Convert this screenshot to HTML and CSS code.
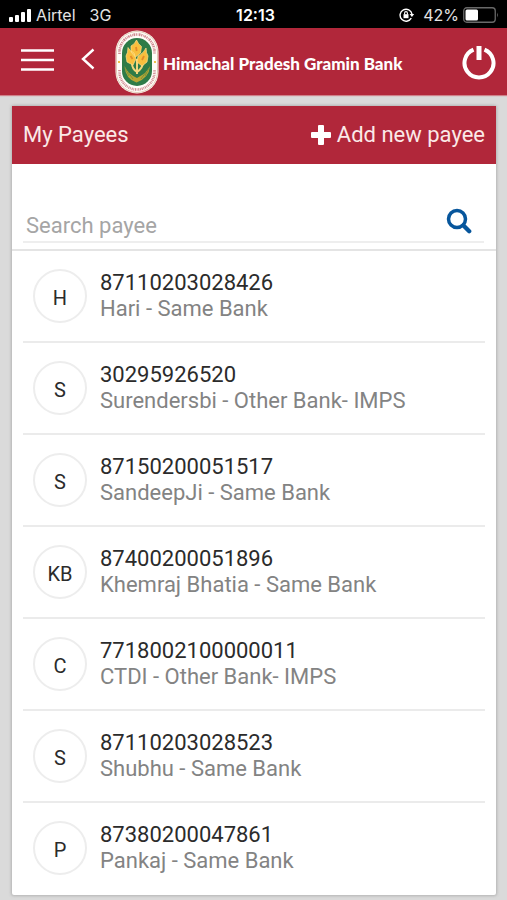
FILE: index.html
```html
<!DOCTYPE html>
<html lang="en">
<head>
<meta charset="utf-8">
<meta name="viewport" content="width=device-width, initial-scale=1">
<title>My Payees</title>
<link rel="stylesheet" href="styles.css">
</head>
<body>
<div class="status">
  <div class="status-side">
    <svg width="24" height="14" viewBox="0 0 24 14" fill="#fff" aria-hidden="true"><rect x="1" y="9" width="4" height="5" rx="1"/><rect x="7" y="7" width="4" height="7" rx="1"/><rect x="13" y="4" width="4" height="10" rx="1"/><rect x="19" y="1" width="4" height="13" rx="1"/></svg>
    <span class="carrier">Airtel</span>
    <span class="network">3G</span>
  </div>
  <div class="clock">12:13</div>
  <div class="status-side status-end">
    <svg width="16" height="14" viewBox="0 0 16 14" fill="none" stroke="#fff" aria-hidden="true"><path d="M12.3 10.2A6 6 0 1 1 13 6.2" stroke-width="1.4"/><path d="M10.6 6h4.6l-2.3 3z" fill="#fff" stroke="none"/><rect x="4.5" y="6.2" width="5" height="4" fill="#fff" stroke="none"/><path d="M5.6 6.5V5a1.4 1.4 0 0 1 2.8 0v1.5" stroke-width="1.1"/></svg>
    <span class="percent">42%</span>
    <svg width="36" height="16" viewBox="0 0 36 16" aria-hidden="true"><rect x=".75" y=".75" width="31.5" height="14.5" rx="3" fill="none" stroke="#696969" stroke-width="1.3"/><rect x="2.5" y="2.5" width="12.5" height="11" rx="1.5" fill="#fff"/><path d="M34 5.5q1.8 2.5 0 5z" fill="#696969"/></svg>
  </div>
</div>
<header class="topbar">
  <button class="icon-btn menu" aria-label="Menu"><svg width="34" height="24" viewBox="0 0 34 24" stroke="#fff" stroke-width="2.6" aria-hidden="true"><path d="M1 2.5h33M1 12h33M1 21.5h33"/></svg></button>
  <button class="icon-btn back" aria-label="Back"><svg width="14" height="22" viewBox="0 0 14 22" fill="none" stroke="#fff" stroke-width="2.4" aria-hidden="true"><path d="M12.5 1.5L2 11l10.500 9.500"/></svg></button>
  <svg class="logo" width="44" height="64" viewBox="0 0 44 64" aria-hidden="true">
    <rect x=".5" y=".5" width="43" height="63" rx="21.500" fill="#fffdf8"/>
    <rect x="1.500" y="1.500" width="41" height="61" rx="20.500" fill="none" stroke="#cfa98a" stroke-width=".6"/>
    <path d="M4.500 24v-2a17.500 17.500 0 0 1 35 0v2" fill="none" stroke="#d08a90" stroke-width="2.600" stroke-dasharray="1.200 .8 .7 .6 1.600 .7"/>
    <path d="M4.500 40v2a17.500 17.500 0 0 0 35 0v-2" fill="none" stroke="#d08a90" stroke-width="2.600" stroke-dasharray="1.100 .7 .8 .8"/>
    <circle cx="4" cy="32" r="1.100" fill="#edb21e"/><circle cx="40" cy="32" r="1.100" fill="#edb21e"/>
    <rect x="7" y="8" width="30" height="48" rx="15" fill="#2e7b47"/>
    <path d="M9.500 36q1 13 12 16.500Q34 48 35 36q-3 7-13 12Q13 44 9.500 36z" fill="#b9a534"/>
    <path d="M10 38l4 8M13 42l5 7M34 38l-4 8M31 42l-5 7" stroke="#79933a" stroke-width="1"/>
    <path d="M22 44V29M22 42q-5-3-5-9M22 42q6-4 6-10" fill="none" stroke="#f3d67c" stroke-width="2"/>
    <path d="M21.500 10q1.500 4 5 6.500l-1 6.500-5 4-4.500-5V16q4-2 5.500-6zM13 17.500q2 4 6 5.500l2 6-3 6-6-3-1-6q2-3 2-8.500zM31 18q0 5 2 8l-1 6-5 4-5-4 1-6q6-3 8-8z" fill="#f8bf3d" stroke="#ffe08c" stroke-width=".7"/>
    <path d="M21 17l.7 4M15.500 26l2 3M29 26l-2 4" stroke="#e58b28" stroke-width="1.800"/>
  </svg>
  <div class="brand">Himachal Pradesh Gramin Bank</div>
  <button class="icon-btn power" aria-label="Log out"><svg width="34" height="36" viewBox="0 0 34 36" fill="none" stroke="#fff" aria-hidden="true"><path d="M11.500 5.600A14.500 14.500 0 1 0 22.500 5.600" stroke-width="4"/><path d="M17 2v14" stroke-width="5"/></svg></button>
</header>
<main class="page">
  <section class="card">
    <div class="card-head">
      <h1>My Payees</h1>
      <button class="add"><svg width="20" height="20" viewBox="0 0 20 20" fill="#fff" aria-hidden="true"><path d="M8 0h4q1 0 1 1v6h6q1 0 1 1v4q0 1-1 1h-6v6q0 1-1 1H8q-1 0-1-1v-6H1q-1 0-1-1V8q0-1 1-1h6V1q0-1 1-1z"/></svg>Add new payee</button>
    </div>
    <div class="search">
      <div class="field">
        <input type="text" placeholder="Search payee" aria-label="Search payee">
        <button class="icon-btn find" aria-label="Search"><svg width="26" height="26" viewBox="0 0 26 26" fill="none" stroke="#07569c" aria-hidden="true"><circle cx="11" cy="11" r="8.500" stroke-width="3.500"/><path d="M17.500 17.500l5.700 5.700" stroke-width="4.300" stroke-linecap="round"/></svg></button>
      </div>
    </div>
    <ul class="payees">
      <li><span class="avatar">H</span><div class="info"><div class="number">87110203028426</div><div class="name">Hari - Same Bank</div></div></li>
      <li><span class="avatar">S</span><div class="info"><div class="number">30295926520</div><div class="name">Surendersbi - Other Bank- IMPS</div></div></li>
      <li><span class="avatar">S</span><div class="info"><div class="number">87150200051517</div><div class="name">SandeepJi - Same Bank</div></div></li>
      <li><span class="avatar">KB</span><div class="info"><div class="number">87400200051896</div><div class="name">Khemraj Bhatia - Same Bank</div></div></li>
      <li><span class="avatar">C</span><div class="info"><div class="number">7718002100000011</div><div class="name">CTDI - Other Bank- IMPS</div></div></li>
      <li><span class="avatar">S</span><div class="info"><div class="number">87110203028523</div><div class="name">Shubhu - Same Bank</div></div></li>
      <li><span class="avatar">P</span><div class="info"><div class="number">87380200047861</div><div class="name">Pankaj - Same Bank</div></div></li>
    </ul>
  </section>
</main>
</body>
</html>
```
FILE: styles.css
```css
* {
  box-sizing: border-box;
}

body {
  margin: 0;
  background: #dadada;
  color: #2b2b2b;
  font-family: Roboto, "Liberation Sans", sans-serif;
}

button {
  padding: 0;
  border: 0;
  background: none;
  color: inherit;
  font: inherit;
}

svg {
  display: block;
  flex: none;
}

.status {
  display: grid;
  grid-template-columns: 1fr auto 1fr;
  align-items: center;
  height: 28px;
  padding: 2px 8px 0;
  background: #000;
  color: #e4e4e4;
  font-family: Inter, "Liberation Sans", sans-serif;
  font-size: 16px;
  line-height: 24px;
}

.status-side {
  display: flex;
  align-items: center;
}

.status-end {
  justify-content: flex-end;
}

.carrier {
  margin: 0 14px 0 4px;
}

.clock {
  padding-left: 4px;
  color: #fff;
  font-weight: 600;
}

.percent {
  margin: 0 4px 0 8px;
}

.topbar {
  display: flex;
  align-items: center;
  height: 67px;
  padding: 0 11px 0 20px;
  background: #b1273a;
  box-shadow: 0 1px 1px #cf8089;
}

.icon-btn {
  flex: none;
}

.menu {
  margin-right: 27px;
  padding-bottom: 4px;
}

.back {
  margin-right: 20px;
  padding-bottom: 6px;
}

.brand {
  flex: 1;
  margin-left: 4px;
  padding-top: 4px;
  color: #fff;
  font-family: Lato, "Liberation Sans", sans-serif;
  font-size: 17px;
  font-weight: 900;
  line-height: 24px;
  white-space: nowrap;
}

.page {
  padding: 11px 11px 6px 12px;
}

.card {
  border-radius: 2px;
  background: #fff;
  box-shadow: 0 0 3px 1px #b4b4b4;
}

.card-head {
  display: flex;
  align-items: center;
  justify-content: space-between;
  height: 58px;
  padding: 0 11px;
  background: #b1273a;
  color: #fbe9e8;
  font-size: 22px;
  line-height: 26px;
}

h1 {
  margin: 0;
  font-size: 22px;
  font-weight: 400;
}

.add {
  display: flex;
  align-items: center;
  gap: 6px;
}

.search {
  padding: 36px 12px 6px 11px;
  border-bottom: 2px solid #e4e4e4;
}

.field {
  display: flex;
  align-items: center;
  height: 43px;
  padding: 0 12px 0 3px;
  border-bottom: 2px solid #eee;
}

.field input {
  flex: 1;
  min-width: 0;
  height: 40px;
  padding: 10px 0 0;
  border: 0;
  outline: 0;
  background: none;
  font: 22px Roboto, "Liberation Sans", sans-serif;
}

.field input::placeholder {
  color: #a5a5a5;
  opacity: 1;
}

.payees {
  margin: 0;
  padding: 0 11px;
  list-style: none;
}

.payees li {
  display: flex;
  align-items: center;
  gap: 13px;
  height: 92px;
  padding-left: 10px;
  border-bottom: 2px solid #ebebeb;
}

.payees li:last-child {
  border-bottom-color: transparent;
}

.avatar {
  display: flex;
  flex: none;
  align-items: center;
  justify-content: center;
  width: 54px;
  height: 54px;
  padding-top: 3px;
  border: 2px solid #ededed;
  border-radius: 50%;
  font-size: 20px;
  line-height: 24px;
}

.info {
  font-size: 22px;
  line-height: 26px;
}

.name {
  color: #838383;
}
```
